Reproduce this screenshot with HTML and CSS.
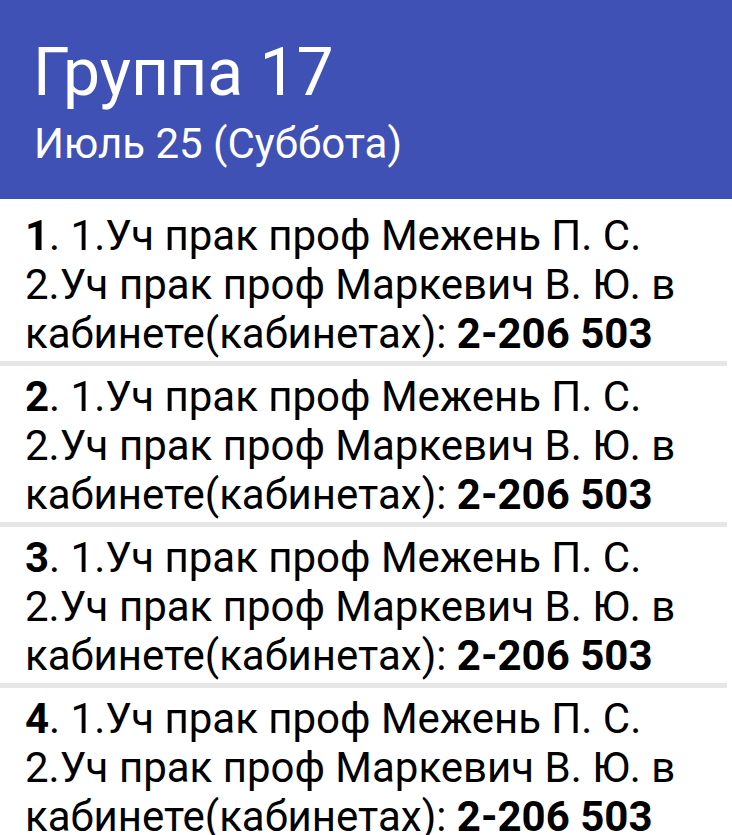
FILE: index.html
```html
<!DOCTYPE html>
<html lang="ru">
<head>
<meta charset="utf-8">
<title>Группа 17</title>
<link rel="stylesheet" href="styles.css">
</head>
<body>
<header class="header">
  <h1 class="title">Группа 17</h1>
  <p class="subtitle">Июль 25 (Суббота)</p>
</header>
<ul class="lessons">
  <li class="lesson"><b>1</b>. 1.Уч прак проф Межень П. С. 2.Уч прак проф Маркевич В. Ю. в кабинете(кабинетах): <b>2-206 503</b></li>
  <li class="lesson"><b>2</b>. 1.Уч прак проф Межень П. С. 2.Уч прак проф Маркевич В. Ю. в кабинете(кабинетах): <b>2-206 503</b></li>
  <li class="lesson"><b>3</b>. 1.Уч прак проф Межень П. С. 2.Уч прак проф Маркевич В. Ю. в кабинете(кабинетах): <b>2-206 503</b></li>
  <li class="lesson"><b>4</b>. 1.Уч прак проф Межень П. С. 2.Уч прак проф Маркевич В. Ю. в кабинете(кабинетах): <b>2-206 503</b></li>
</ul>
</body>
</html>
```
FILE: styles.css
```css
html, body {
  margin: 0;
  padding: 0;
  background: #ffffff;
  font-family: Roboto, "Noto Sans", "Liberation Sans", sans-serif;
  overflow: hidden;
}

.header {
  background: #3f51b5;
  color: #ffffff;
  padding: 34px 33px 31px 33px;
}

.title {
  margin: 0;
  font-size: 66px;
  line-height: 77px;
  font-weight: 400;
}

.subtitle {
  margin: 8px 0 0 1px;
  font-size: 42px;
  line-height: 49px;
}

.lessons {
  list-style: none;
  margin: 0;
  padding: 6px 0 0 0;
}

.lesson {
  margin-right: 5px;
  padding: 6px 0 3px 25px;
  font-size: 42px;
  line-height: 49px;
  color: #000000;
  border-bottom: 5px solid #e6e6e6;
}

.lesson b {
  font-weight: 700;
}
```
